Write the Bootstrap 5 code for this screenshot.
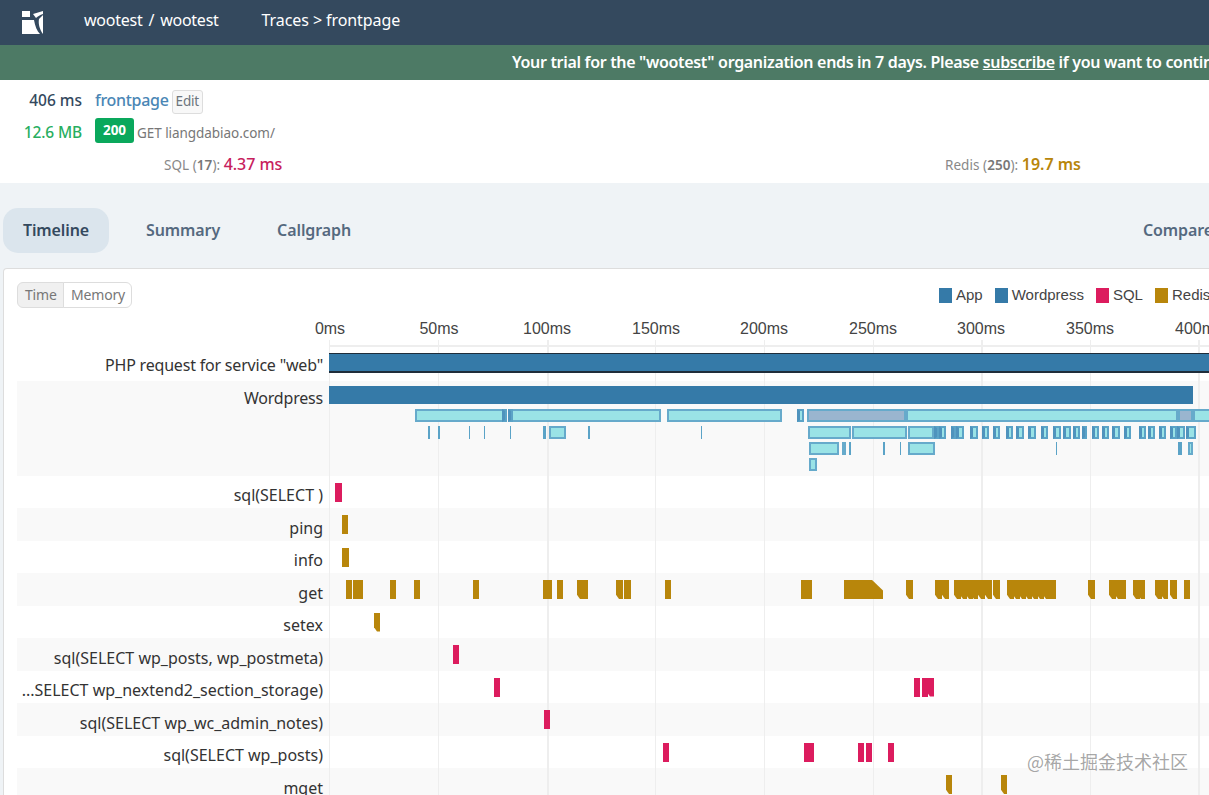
<!DOCTYPE html>
<html lang="en">
<head>
<meta charset="utf-8">
<title>Traces</title>
<link rel="stylesheet" href="https://cdn.jsdelivr.net/npm/bootstrap@5.3.0/dist/css/bootstrap.min.css">
<style>
html,body{height:795px;overflow:hidden}
body{width:1209px;background:#eff3f6;font-family:"Noto Sans","Liberation Sans",sans-serif;color:#34495e;font-size:15px}
.top-bar{height:45px;background:#34495e;color:#fff;font-size:16px;letter-spacing:-.25px;padding-bottom:5px}
.logo-box{width:23px;margin-left:22px;margin-right:39px;padding-top:5px}
.path-sep{margin:0 6px}
.crumb-text{margin-left:43px;letter-spacing:-.08px;white-space:nowrap}
.trial-bar{height:35px;background:#4d7a65;color:#fff;font-weight:600;font-size:16px;letter-spacing:-.32px;padding:0 0 2px 512px;white-space:nowrap}
.trial-bar a{color:#fff}
.meta-box{height:103px;background:#fff}
.meta-first{height:40px}
.meta-second{height:25px;margin-top:-2px}
.meta-num{width:82px;text-align:right;font-weight:500;font-size:15.5px;padding-top:2px}
.meta-name{color:#4a86b5;font-weight:500;font-size:16px;letter-spacing:-.3px;margin-left:13px}
.edit-btn{font-size:13.5px;line-height:1;padding:4px 3px;height:24px;margin:4px 0 0 3px;color:#6c757d;background:#f8f8f8;border:1px solid #ddd;border-radius:3px;letter-spacing:-.2px}
.meta-ok{color:#27ae60;letter-spacing:-.15px;padding-top:5px}
.stat-badge{width:39px;height:25px;margin-left:13px;background:#0aa85c;color:#fff;font-weight:700;font-size:13.5px;border-radius:3px}
.req-text{color:#777;font-size:13.5px;margin-left:3px;letter-spacing:-.05px;padding-top:6px}
.stat-line{color:#888;font-size:13.5px;letter-spacing:.05px;height:22px;margin-top:10px}
.stat-sql{margin-left:164px;width:781px}
.stat-sql b,.stat-red b{font-weight:600;color:#777}
.val-sql{color:#c7215d;font-size:16px;font-weight:500;letter-spacing:-.05px}
.val-red{color:#b8860b;font-size:16px;font-weight:600;letter-spacing:-.05px}
.tab-bar{height:85px;padding:25px 0 15px 3px;margin-right:-4px}
.tab-item{height:45px;font-weight:600;font-size:16px;letter-spacing:-.1px;color:#55697f;padding:0 37px 2px 0;text-decoration:none}
.tab-on{width:106px;background:#dbe5ed;border-radius:15px;color:#34495e;justify-content:center;padding:0 0 2px;margin-right:37px}
.tab-mid{margin-right:20px}
.tab-right{margin-left:auto;padding:0 0 2px}
.tl-card{margin:0 -120px 0 3px;background:#fff;border:1px solid #ddd;border-bottom:0;border-radius:4px 0 0 0;padding:13px 0 0 13px;height:600px;position:relative}
.view-group{height:26px}
.view-group .btn{font-size:14px;line-height:1;padding:0 6.5px 0 7px;border:1px solid #ddd;color:#777;background:#fff;font-family:"Noto Sans",sans-serif;letter-spacing:-.2px}
.view-group .view-on{background:#f0f0f0;color:#777}
.legend-box{margin-left:807px;font-family:"Liberation Sans",sans-serif;font-size:15px;color:#444;gap:12.5px}
.leg-sw{width:13px;height:15px;margin-right:3.5px}
.sw-blue{background:#357aa8}
.sw-red{background:#dc1c5e}
.sw-gold{background:#b8860b}
.axis-row{height:39px;margin:0 0 1px 312px;position:relative;border-bottom:2px solid #eee;font-family:"Liberation Sans",sans-serif;font-size:16px;color:#444}
.axis-tick{position:absolute;top:9px;transform:translateX(-50%);white-space:nowrap}
.tl-rows{position:relative}
.tl-row{height:32.5px;display:flex}
.tl-stripe{background:#f9f9f9}
.tl-tall{height:95px}
.tl-name{width:312px;flex:none;text-align:right;padding:7.5px 6px 0 0;font-size:16px;color:#333;white-space:nowrap;overflow:hidden;line-height:24px}
.tl-name-hi{padding-top:5px;letter-spacing:-.2px}
.tl-track{flex:1;position:relative}
.tl-bar{position:absolute;height:19px;top:7px;z-index:1}
.bar-main{background:#357aa8;height:18px}
.bar-php{border-top:1px solid #1f2d3a;border-bottom:2px solid #1f2d3a;top:4.5px;height:20px}
.bar-sub{background:#9ae3e6;border:2px solid #66aacb;height:13px}
.bar-tiny{background:#9ae3e6;border:2px solid #5ba3c7;border-left:3px solid #4f93bd;height:13px}
.bar-thin{background:#5ba3c7;height:13px}
.bar-slate{background:#9ab5cf;border:2px solid #66aacb;height:13px}
.bar-sql{background:#dc1c5e}
.bar-red{background:#b8860b}
.bar-cut{clip-path:polygon(0 0,100% 0,100% 100%,3px 100%,0 78%)}
.bar-slope{clip-path:polygon(0 0,72% 0,100% 55%,100% 100%,0 100%)}
.grid-line{position:absolute;top:-8px;bottom:0;width:1px;background:#eee}
.grid-wide{width:2px}
.mark-text{position:absolute;left:1027px;top:748px;font-family:"Noto Sans CJK SC",sans-serif;font-size:18px;color:rgba(110,110,110,.62);white-space:nowrap;pointer-events:none}
</style>
</head>
<body>
<header class="top-bar d-flex align-items-center">
  <div class="logo-box d-flex">
    <svg width="22" height="24" viewBox="0 0 22 24"><path fill="#fff" d="M0 0h8v6H0zM0 9h12c1 6 3 11 6 14H0zM11 3L21 0v3c-3 1-5 2-7 4zM17 8l4-4v19c-3-4-5-10-4-15z"/></svg>
  </div>
  <span>wootest<span class="path-sep">/</span>wootest</span>
  <span class="crumb-text">Traces &gt; frontpage</span>
</header>
<div class="trial-bar d-flex align-items-center">Your trial for the "wootest" organization ends in 7 days. Please&nbsp;<a href="#">subscribe</a>&nbsp;if you want to continue using the service after your trial ends.</div>
<section class="meta-box">
  <div class="meta-first d-flex align-items-center">
    <span class="meta-num">406 ms</span>
    <a class="meta-name text-decoration-none" href="#">frontpage</a>
    <button class="edit-btn" type="button">Edit</button>
  </div>
  <div class="meta-second d-flex align-items-center">
    <span class="meta-num meta-ok">12.6 MB</span>
    <span class="stat-badge d-flex align-items-center justify-content-center">200</span>
    <span class="req-text">GET liangdabiao.com/</span>
  </div>
  <div class="d-flex stat-line align-items-center">
    <span class="stat-sql">SQL (<b>17</b>): <span class="val-sql">4.37 ms</span></span>
    <span class="stat-red">Redis (<b>250</b>): <span class="val-red">19.7 ms</span></span>
  </div>
</section>
<nav class="tab-bar d-flex">
  <a href="#" class="tab-item tab-on d-flex align-items-center">Timeline</a>
  <a href="#" class="tab-item tab-mid d-flex align-items-center">Summary</a>
  <a href="#" class="tab-item d-flex align-items-center">Callgraph</a>
  <a href="#" class="tab-item tab-right d-flex align-items-center">Compare</a>
</nav>
<main class="tl-card">
  <div class="d-flex align-items-center">
    <div class="btn-group view-group">
      <button class="btn view-on" type="button">Time</button>
      <button class="btn" type="button">Memory</button>
    </div>
    <div class="legend-box d-flex align-items-center">
      <span class="d-flex align-items-center"><i class="leg-sw sw-blue"></i>App</span>
      <span class="d-flex align-items-center"><i class="leg-sw sw-blue"></i>Wordpress</span>
      <span class="d-flex align-items-center"><i class="leg-sw sw-red"></i>SQL</span>
      <span class="d-flex align-items-center"><i class="leg-sw sw-gold"></i>Redis</span>
    </div>
  </div>
  <div class="axis-row" id="axis"></div>
  <div class="tl-rows" id="rows">
    <div class="tl-row"><div class="tl-name tl-name-hi">PHP request for service "web"</div><div class="tl-track" id="t0"></div></div>
    <div class="tl-row tl-tall tl-stripe"><div class="tl-name tl-name-hi">Wordpress</div><div class="tl-track" id="t1"></div></div>
    <div class="tl-row"><div class="tl-name">sql(SELECT )</div><div class="tl-track" id="t2"></div></div>
    <div class="tl-row tl-stripe"><div class="tl-name">ping</div><div class="tl-track" id="t3"></div></div>
    <div class="tl-row"><div class="tl-name">info</div><div class="tl-track" id="t4"></div></div>
    <div class="tl-row tl-stripe"><div class="tl-name">get</div><div class="tl-track" id="t5"></div></div>
    <div class="tl-row"><div class="tl-name">setex</div><div class="tl-track" id="t6"></div></div>
    <div class="tl-row tl-stripe"><div class="tl-name">sql(SELECT wp_posts, wp_postmeta)</div><div class="tl-track" id="t7"></div></div>
    <div class="tl-row"><div class="tl-name">...SELECT wp_nextend2_section_storage)</div><div class="tl-track" id="t8"></div></div>
    <div class="tl-row tl-stripe"><div class="tl-name">sql(SELECT wp_wc_admin_notes)</div><div class="tl-track" id="t9"></div></div>
    <div class="tl-row"><div class="tl-name">sql(SELECT wp_posts)</div><div class="tl-track" id="t10"></div></div>
    <div class="tl-row tl-stripe"><div class="tl-name">mget</div><div class="tl-track" id="t11"></div></div>
  </div>
</main>
<div class="mark-text">@稀土掘金技术社区</div>
<script>
var X0=329;
function bar(t,x,w,cls,top){
  var d=document.createElement('div');
  d.className='tl-bar '+cls;
  d.style.left=(x-X0)+'px';
  d.style.width=w+'px';
  if(top!==undefined)d.style.top=top+'px';
  document.getElementById(t).appendChild(d);
}
var axis=document.getElementById('axis');
[[0,330],[50,439],[100,547],[150,656],[200,764],[250,873],[300,981],[350,1090],[400,1199]].forEach(function(k){
  var s=document.createElement('span');
  s.className='axis-tick';s.textContent=k[0]+'ms';
  s.style.left=(k[1]-X0)+'px';
  axis.appendChild(s);
});
var rowsEl=document.getElementById('rows');
[[329,1],[438,1],[547,2],[655,1],[764,1],[873,1],[981,2],[1090,1],[1198,2]].forEach(function(g){
  var l=document.createElement('div');
  l.className='grid-line'+(g[1]==2?' grid-wide':'');
  l.style.left=(g[0]-17)+'px';
  rowsEl.appendChild(l);
});
bar('t0',329,900,'bar-main bar-php');
bar('t1',329,864,'bar-main',5);
var Y=[28,45,61,77];
[[415,90],[511,150],[667,115],[906,272],[1193,20]].forEach(function(b){bar('t1',b[0],b[1],'bar-sub',Y[0]);});
[[502,3],[508,3],[797,7]].forEach(function(b){bar('t1',b[0],b[1],'bar-tiny',Y[0]);});
[[807,99],[1178,15]].forEach(function(b){bar('t1',b[0],b[1],'bar-slate',Y[0]);});
[[428,2],[438,2],[469,1],[484,1],[510,1],[543,3],[588,2],[701,1]].forEach(function(b){bar('t1',b[0],b[1],'bar-thin',Y[1]);});
[[549,17],[808,43],[852,55],[908,26]].forEach(function(b){bar('t1',b[0],b[1],'bar-sub',Y[1]);});
[[934,5],[939,7],[951,3],[956,8],[970,8],[982,7],[993,7],[1006,7],[1016,8],[1028,8],[1041,7],[1053,8],[1063,8],[1073,7],[1082,5],[1092,7],[1102,7],[1112,8],[1124,7],[1139,7],[1148,7],[1159,7],[1170,7],[1177,8],[1186,10]].forEach(function(b){bar('t1',b[0],b[1],'bar-tiny',Y[1]);});
[[809,30],[842,4],[908,27],[1188,5]].forEach(function(b){bar('t1',b[0],b[1],'bar-sub',Y[2]);});
[[849,2],[883,2],[900,1],[1056,1],[1178,4]].forEach(function(b){bar('t1',b[0],b[1],'bar-thin',Y[2]);});
bar('t1',809,8,'bar-sub',Y[3]);
bar('t2',335,7,'bar-sql');
bar('t3',342,6,'bar-red');
bar('t4',342,7,'bar-red');
bar('t6',374,6,'bar-red bar-cut');
bar('t7',453,6,'bar-sql');
[[494,6],[914,6],[922,6]].forEach(function(b){bar('t8',b[0],b[1],'bar-sql');});
bar('t8',927,7,'bar-sql bar-cut');
bar('t9',544,6,'bar-sql');
[[663,6],[804,10],[858,6],[866,6],[888,6]].forEach(function(b){bar('t10',b[0],b[1],'bar-sql');});
[946,1001].forEach(function(x){bar('t11',x,6,'bar-red bar-cut');});
[[346,6],[353,10],[390,6],[414,6],[473,6],[543,9],[557,6],[624,7],[665,6],[801,11],[1050,6],[1184,6]].forEach(function(b){bar('t5',b[0],b[1],'bar-red');});
bar('t5',844,39,'bar-red bar-slope');
[577,581,616,906,935,942,954,960,966,971,978,985,993,1007,1013,1019,1025,1031,1037,1043,1088,1109,1115,1119,1133,1138,1155,1161,1170].forEach(function(x){bar('t5',x,7,'bar-red bar-cut');});
</script>
<script src="https://cdn.jsdelivr.net/npm/bootstrap@5.3.0/dist/js/bootstrap.bundle.min.js"></script>
</body>
</html>
